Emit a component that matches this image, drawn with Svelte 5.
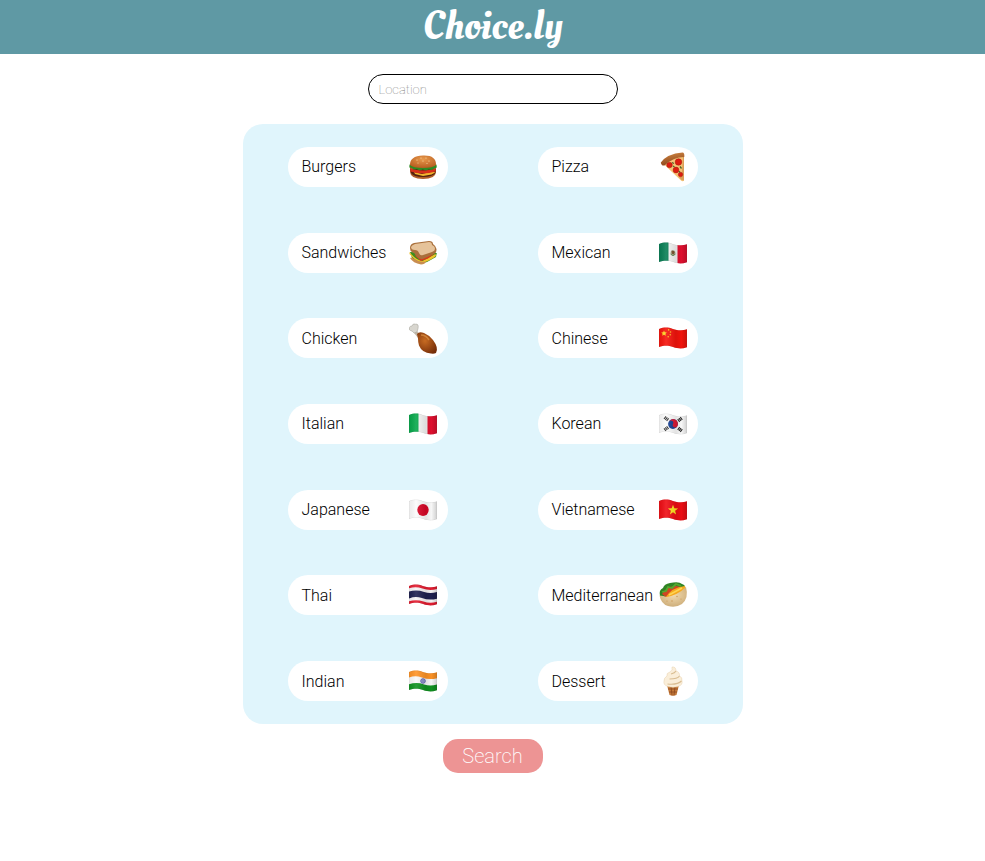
<script>
  const cuisines = [
    { name: 'Burgers', icon: 'burger' },
    { name: 'Pizza', icon: 'pizza' },
    { name: 'Sandwiches', icon: 'sandwich' },
    { name: 'Mexican', icon: 'mexico' },
    { name: 'Chicken', icon: 'chicken' },
    { name: 'Chinese', icon: 'china' },
    { name: 'Italian', icon: 'italy' },
    { name: 'Korean', icon: 'korea' },
    { name: 'Japanese', icon: 'japan' },
    { name: 'Vietnamese', icon: 'vietnam' },
    { name: 'Thai', icon: 'thailand' },
    { name: 'Mediterranean', icon: 'wrap' },
    { name: 'Indian', icon: 'india' },
    { name: 'Dessert', icon: 'cone' }
  ];
  const flags = ['mexico', 'china', 'italy', 'korea', 'japan', 'vietnam', 'thailand', 'india'];
  const wave = 'M0 5 C5 3 9 3.2 14 5 S24 6.7 28 5.3 V23.3 C23 25 19 24.8 14 23 S5 21.3 0 23 Z';

  let location = $state('');
  let selected = $state([]);

  function toggle(name) {
    selected = selected.includes(name) ? selected.filter((n) => n !== name) : [...selected, name];
  }
</script>

{#snippet flagArt(icon)}
  <g clip-path="url(#wave)">
    {#if icon === 'mexico' || icon === 'italy'}
      <path fill="#f5f5f4" d="M0 0h28v28H0z" />
      <path fill={icon === 'italy' ? '#07a84b' : '#087f55'} d="M0 0h9.5v28H0z" />
      <path fill="#e2102f" d="M18.5 0H28v28h-9.5z" />
      {#if icon === 'mexico'}
        <ellipse cx="14" cy="14" rx="2.4" ry="2.8" fill="#a9ad8d" />
        <path d="M12.7 11.500l2.200.4.8 1.800-1.300 1.800-1.700-1z" fill="#79512d" />
        <path d="M11.600 14.800q2.400 3.500 4.800 0" fill="none" stroke="#527e46" stroke-width=".8" />
      {/if}
    {:else if icon === 'china'}
      <path fill="#f5140c" d="M0 0h28v28H0z" />
      <path fill="#ffd725" d="M5 6.400l.8 1.800 2 .2-1.400 1.400.4 2-1.800-1-1.800 1 .4-2-1.400-1.400 2-.2z" />
      <g fill="#ffba20">
        <circle cx="9.6" cy="5.9" r=".8" /><circle cx="11.5" cy="8" r=".8" />
        <circle cx="11.3" cy="10.8" r=".8" /><circle cx="9.2" cy="12.7" r=".8" />
      </g>
    {:else if icon === 'vietnam'}
      <path fill="#ef0d14" d="M0 0h28v28H0z" />
      <path fill="#ffe51e" d="M14 8.700l1.300 3.500 3.800.2-3 2.300 1 3.700-3.100-2.100-3.100 2.100 1-3.700-3-2.300 3.800-.2z" />
    {:else if icon === 'japan'}
      <path fill="#fcfcfc" d="M0 0h28v28H0z" />
      <ellipse cx="14" cy="14" rx="5.7" ry="6" fill="#d80525" />
    {:else if icon === 'korea'}
      <path fill="#fcfcfc" d="M0 0h28v28H0z" />
      <g transform="rotate(25 14 14)">
        <circle cx="14" cy="14" r="4.900" fill="#153f94" />
        <path d="M9.100 14a4.900 4.900 0 0 1 9.800 0 2.450 2.450 0 0 1-4.900 0 2.450 2.450 0 0 0-4.900 0" fill="#dc1935" />
      </g>
      <g stroke="#292929" stroke-width="1.100" fill="none">
        <path d="M5 9l2-2.700M6.300 10l2-2.700M7.600 11l2-2.700M18.700 9.200l2 2.700M20 8.200l2 2.700M21.300 7.200l2 2.700M5 18.300l2 2.700M6.300 17.300l2 2.700M7.600 16.300l2 2.700M18.700 19.800l2-2.700M20 20.800l2-2.700M21.300 21.800l2-2.700" />
      </g>
    {:else if icon === 'thailand'}
      <path fill="#f7f4f5" d="M0 0h28v28H0z" />
      <g fill="none">
        <path d="M-1 6 C5 3.700 9 4.200 14 6 S24 7.700 29 6" stroke="#e51c30" stroke-width="3.200" />
        <path d="M-1 14.300 C5 12 9 12.200 14 14 S24 15.700 29 14" stroke="#1f2050" stroke-width="6.600" />
        <path d="M-1 22.200 C5 20 9 20.200 14 22 S24 23.700 29 22" stroke="#e51c30" stroke-width="3.200" />
      </g>
    {:else if icon === 'india'}
      <path fill="#f9f9f9" d="M0 0h28v28H0z" />
      <path d="M-1 7.500 C5 5.200 9 5.700 14 7.500 S24 9.200 29 7.500" stroke="#ff9426" stroke-width="6.500" fill="none" />
      <path d="M-1 21 C5 18.700 9 18.700 14 20.500 S24 22.200 29 20.500" stroke="#109320" stroke-width="6.500" fill="none" />
      <circle cx="14" cy="14" r="2.300" fill="#c9cbe5" stroke="#3942a0" stroke-width=".8" />
      <path d="M14 12v4M12 14h4" stroke="#3942a0" stroke-width=".5" />
    {/if}
    <path d={wave} fill="url(#cloth)" stroke="#555" stroke-opacity=".2" stroke-width=".6" />
  </g>
{/snippet}

{#snippet foodArt(icon)}
  {#if icon === 'burger'}
    <path d="M1 14h26v5q-.5 7-13 7T1 19z" fill="#b0602a" />
    <path d="M1.500 16h25v4q-3 4-12.500 4T2 20z" fill="#54220e" />
    <path d="M5 19l8 2 9-2.200 4.500.5-4 2.200-8.500 1.600L6 21z" fill="#f1b72d" />
    <path d="M1.500 15.500q12.500 4 25 0v3q-12.500 4-25 0z" fill="#d7301a" />
    <path d="M.5 11.500q13 5 27 0l.3 3-3 1.200-2 1.300-3-.6-3 1.200-3-1-3 .8-3-1.200-3 .3-2-1.500-2.500-.5z" fill="#2f8b22" />
    <path d="M1 12Q.7 3 14 2.500T27 12q-3 3-13 3T1 12z" fill="url(#bun)" />
    <g fill="#ffe2a9">
      <circle cx="8" cy="7" r=".6" /><circle cx="12" cy="5" r=".6" /><circle cx="17" cy="5" r=".6" />
      <circle cx="14" cy="8" r=".6" /><circle cx="20" cy="8" r=".6" /><circle cx="9" cy="10" r=".5" /><circle cx="18" cy="10.500" r=".5" />
    </g>
  {:else if icon === 'pizza'}
    <path d="M3.500 10L25 2v25.500q-1.500 1.500-3 0z" fill="#f6c376" />
    <path d="M24 4h1v23.500l-2.500-.5-3-3.500 3 .5z" fill="#dba058" />
    <g fill="#dc1c10" stroke="#a9180d" stroke-width=".5">
      <circle cx="10.500" cy="12" r="2.800" /><circle cx="19.500" cy="9" r="3.300" />
      <circle cx="17" cy="17" r="2.900" /><circle cx="21.500" cy="21.500" r="2.200" />
    </g>
    <path d="M13 9.500l2 1M21 13.500l1.500 2M14 13l1.500 1M20 18l1 1.500" stroke="#4d6629" stroke-width="1.300" />
    <path d="M1.800 9.500Q8 .8 23.500-.5q2.200.2 1.800 4.500Q14 4 5.500 12.500q-3.200.6-3.700-3z" fill="url(#crust)" />
  {:else if icon === 'sandwich'}
    <path d="M1 13l2 6 8 6 7-2 9-5 .8-4z" fill="#3b8f1f" />
    <path d="M.5 13q6 8 13 9l13-7 .5 2q-6 5-14 7Q6 22 .5 15z" fill="#f2c22c" />
    <path d="M5 16l7 6 7-2.500 6-4.500-2-1-10 5z" fill="#d93a1b" />
    <path d="M1 19q3 5 11 6.500 4 0 5-3-8 1-14-4z" fill="#c88d50" />
    <path d="M1 9q0-4 4-5l15-2q4 0 4 3 3 2 3.500 5 .2 4-2.500 5l-11 5q-4 1-7-3-1-3-4-4-2-1-2-4z" fill="#a96f3b" />
    <path d="M2 8q1-2 4-3l14-2q3 0 3 3 3 1 3 4 0 2-3 3l-9 3q-3 1-4-2-1-3-4-3Q2 11 2 8z" fill="#e6c39a" />
  {:else if icon === 'chicken'}
    <path d="M7 6l6 7-3 2-5-6z" fill="#c1b5a4" />
    <path d="M.5 3.500Q1 1.800 3 2q1-3 3.500-1.800Q10-.5 9 4.500L8 8 5 9Q3 6.500 1.500 6.500T.5 3.500z" fill="#d8d6cf" stroke="#aaa89f" stroke-width=".6" />
    <path d="M8 10q2-3 7-1 5 2 9 7 6 8 3 13-2 1-5 .5-9-.5-12-8-1-3-1-7z" fill="url(#roast)" />
    <path d="M12 11q5 0 8 5" fill="none" stroke="#e6a04f" stroke-width="1.500" opacity=".6" />
  {:else if icon === 'wrap'}
    <path d="M1 15Q-.5 9 4 7q1-4 7-5 9-2 12 1 4 1 3 5L8 21z" fill="#2f8424" />
    <path d="M3 13q5-8 14-8l5 1L8 17z" fill="#cf4623" />
    <path d="M3 11l4-1 2-4 4 1 4-4 5 2" fill="none" stroke="#55a82e" stroke-width="1.800" />
    <path d="M6 17Q13 6 26 5l1 4-17 10z" fill="#f5a91f" />
    <path d="M10 14l13-7" stroke="#ffd552" stroke-width="1.500" />
    <path d="M.5 14.500q4 0 7 1.500Q19 14 27 6q3 11-4 17-6 4-14 2Q2 23 .5 14.500z" fill="url(#pita)" />
    <g fill="#c99754"><circle cx="18" cy="15.500" r=".7" /><circle cx="13" cy="20" r=".7" /><circle cx="22" cy="18" r=".6" /><circle cx="8" cy="20" r=".6" /></g>
  {:else if icon === 'cone'}
    <path d="M8 18h12l-2.500 10q-3.500 1.500-7 0z" fill="#c47a39" />
    <path d="M9 22h10M10 25h8M12 19l1 9.500M16 19l-1 9.500" stroke="#87431d" stroke-width=".7" />
    <path d="M13 0q4-.5 4 4 4 1 3.500 5 3 1 2.500 5 1 4-4 5.500-5 1.500-10 0Q4 18 5 14q-.3-3 3-5-1-3 3-4 3-2 2-5z" fill="#faeed9" stroke="#e7d1ae" stroke-width=".5" />
    <path d="M17 4q-1 2-5 3M20.500 9q-2 3-10 3M22.500 14q-4 4-14 3" fill="none" stroke="#d9bd92" stroke-width="1.100" />
  {/if}
{/snippet}

<svg class="defs" aria-hidden="true">
  <defs>
    <clipPath id="wave"><path d={wave} /></clipPath>
    <linearGradient id="cloth">
      <stop offset="0" stop-color="#000" stop-opacity=".06" />
      <stop offset=".25" stop-color="#fff" stop-opacity=".1" />
      <stop offset=".6" stop-color="#000" stop-opacity=".1" />
      <stop offset=".8" stop-color="#000" stop-opacity=".02" />
      <stop offset="1" stop-color="#000" stop-opacity=".18" />
    </linearGradient>
    <radialGradient id="bun" cx=".5" cy=".3" r=".7"><stop offset="0" stop-color="#e8994c" /><stop offset="1" stop-color="#b85d20" /></radialGradient>
    <linearGradient id="crust" x2=".3" y2="1"><stop offset="0" stop-color="#d48a45" /><stop offset="1" stop-color="#8c461b" /></linearGradient>
    <radialGradient id="roast" cx=".4" cy=".4" r=".7"><stop offset="0" stop-color="#c76b22" /><stop offset="1" stop-color="#742c08" /></radialGradient>
    <radialGradient id="pita" cx=".5" cy=".4" r=".7"><stop offset="0" stop-color="#f2dbb0" /><stop offset="1" stop-color="#c9a873" /></radialGradient>
  </defs>
</svg>

<header><h1>Choice.ly</h1></header>

<main>
  <input type="text" placeholder="Location" aria-label="Location" bind:value={location} />
  <div class="panel">
    {#each cuisines as { name, icon } (name)}
      <button type="button" class="choice" class:selected={selected.includes(name)} aria-pressed={selected.includes(name)} onclick={() => toggle(name)}>
        <span>{name}</span>
        <svg viewBox="0 0 28 28" aria-hidden="true">
          {#if flags.includes(icon)}
            {@render flagArt(icon)}
          {:else}
            {@render foodArt(icon)}
          {/if}
        </svg>
      </button>
    {/each}
  </div>
  <button type="button" class="search">Search</button>
</main>

<style>
  :global(body) {
    margin: 0;
    background: #fff;
    font-family: Roboto, sans-serif;
  }
  .defs {
    position: absolute;
    width: 0;
    height: 0;
  }
  header {
    display: flex;
    justify-content: center;
    align-items: center;
    height: 54px;
    background: #5f99a4;
  }
  h1 {
    margin: 0;
    color: #fff;
    font: 400 40px/54px 'Oleo Script', 'Liberation Serif', serif;
  }
  main {
    display: flex;
    flex-direction: column;
    align-items: center;
    padding: 20px 0;
  }
  input {
    box-sizing: border-box;
    width: 250px;
    height: 30px;
    padding: 0 10px;
    border: 1px solid #000;
    border-radius: 15px;
    background: #fff;
    font: 100 13px Roboto, sans-serif;
  }
  input::placeholder {
    color: #757575;
    opacity: 1;
  }
  .panel {
    display: grid;
    grid-template-columns: 1fr 1fr;
    grid-auto-rows: 1fr;
    place-items: center;
    width: 100%;
    max-width: 500px;
    min-height: 600px;
    margin: 20px 0 15px;
    border-radius: 20px;
    background: #e0f5fc;
  }
  .choice {
    display: flex;
    justify-content: space-between;
    align-items: center;
    box-sizing: border-box;
    width: 160px;
    height: 40px;
    padding: 0 11px 0 14px;
    border: 0;
    border-radius: 20px;
    background: #fff;
    color: #000;
    font: 300 16px Roboto, sans-serif;
    cursor: pointer;
  }
  .choice.selected {
    background: #ffe3e1;
  }
  .choice svg {
    flex: none;
    width: 28px;
    height: 28px;
    overflow: visible;
  }
  .search {
    width: 100px;
    height: 34px;
    padding: 0;
    border: 0;
    border-radius: 15px;
    background: #ed9494;
    color: #fff;
    font: 200 20px Roboto, sans-serif;
    cursor: pointer;
  }
</style>
